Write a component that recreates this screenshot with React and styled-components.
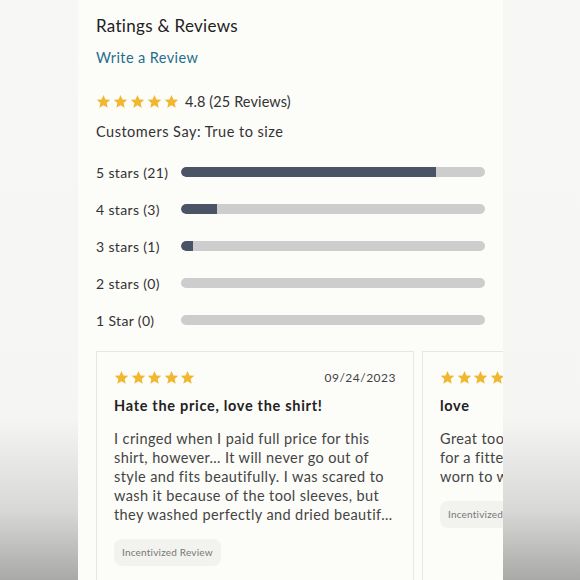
import React from "react";
import styled, { createGlobalStyle } from "styled-components";

const Global = createGlobalStyle`
  html, body { margin: 0; padding: 0; }
  body {
    width: 580px;
    height: 580px;
    overflow: hidden;
    background: linear-gradient(to bottom, #f7f7f5 0%, #f5f5f3 72%, #d8d8d6 88%, #a9a9a7 100%);
    font-family: "Lato", "Noto Sans", sans-serif;
  }
`;

const Page = styled.div`
  display: flex;
  justify-content: flex-start;
  padding-left: 78px;
  height: 580px;
`;

const Panel = styled.section`
  width: 425px;
  height: 580px;
  box-sizing: border-box;
  padding: 14px 0 0 18px;
  background: #fcfcf9;
  overflow: hidden;
  display: flex;
  flex-direction: column;
`;

const Heading = styled.h2`
  margin: 0;
  font-size: 17px;
  line-height: 24px;
  font-weight: 400;
  color: #222;
  letter-spacing: 0.3px;
`;

const WriteLink = styled.a`
  margin-top: 10px;
  font-size: 14.5px;
  line-height: 20px;
  color: #1f6f8b;
  letter-spacing: 0.4px;
  text-decoration: none;
`;

const SummaryRow = styled.div`
  margin-top: 23px;
  display: flex;
  align-items: center;
  gap: 6px;
  height: 20px;
`;

const Stars = styled.div`
  display: flex;
  gap: ${(p) => p.$gap}px;
`;

const SummaryText = styled.span`
  font-size: 14.5px;
  color: #333;
  letter-spacing: 0.1px;
`;

const Say = styled.div`
  margin-top: 11px;
  font-size: 14.5px;
  line-height: 20px;
  color: #333;
  letter-spacing: 0.5px;
`;

const Bars = styled.div`
  margin-top: 20px;
  display: flex;
  flex-direction: column;
  gap: 17px;
  width: 389px;
`;

const BarRow = styled.div`
  display: flex;
  align-items: center;
  height: 20px;
`;

const BarLabel = styled.span`
  width: 85px;
  flex-shrink: 0;
  font-size: 14px;
  color: #333;
  letter-spacing: 0.35px;
`;

const Track = styled.div`
  flex: 1;
  height: 10px;
  border-radius: 5px;
  background: #cdcdcd;
  overflow: hidden;
  display: flex;
`;

const Fill = styled.div`
  height: 100%;
  background: #4a5466;
  border-radius: 5px 0 0 5px;
`;

const Cards = styled.div`
  margin-top: 21px;
  display: flex;
  gap: 8px;
  flex: 1;
`;

const Card = styled.article`
  width: 318px;
  flex-shrink: 0;
  box-sizing: border-box;
  border: 1px solid #e6e6e2;
  border-bottom: none;
  padding: 17px 17px 0;
  background: #fcfcf9;
`;

const CardTop = styled.div`
  display: flex;
  justify-content: space-between;
  align-items: center;
  height: 16px;
`;

const DateText = styled.span`
  font-size: 12px;
  color: #444;
  letter-spacing: 0.5px;
`;

const Title = styled.h3`
  margin: 11px 0 0;
  font-size: 14.5px;
  line-height: 20px;
  font-weight: 700;
  color: #222;
  letter-spacing: 0.7px;
`;

const Body = styled.p`
  margin: 13px 0 0;
  font-size: 14.5px;
  line-height: 19px;
  color: #444;
  letter-spacing: 0.4px;
`;

const Badge = styled.span`
  display: inline-block;
  margin-top: 15px;
  padding: 0 8px;
  height: 27px;
  line-height: 27px;
  border-radius: 8px;
  background: #f2f2ef;
  font-size: 10px;
  color: #777;
  letter-spacing: 0.2px;
  white-space: nowrap;
`;

const Star = ({ size }) => (
  <svg width={size} height={size} viewBox="0 0 24 24">
    <path
      d="M12 1.5l3.1 7.1 7.7.7-5.8 5.1 1.7 7.6L12 18l-6.7 4 1.7-7.6L1.2 9.3l7.7-.7z"
      fill="#f0b72f"
    />
  </svg>
);

const StarRow = ({ size = 15, gap = 2 }) => (
  <Stars $gap={gap}>
    {[0, 1, 2, 3, 4].map((i) => (
      <Star key={i} size={size} />
    ))}
  </Stars>
);

const dist = [
  { label: "5 stars (21)", count: 21 },
  { label: "4 stars (3)", count: 3 },
  { label: "3 stars (1)", count: 1 },
  { label: "2 stars (0)", count: 0 },
  { label: "1 Star (0)", count: 0 },
];

const reviews = [
  {
    date: "09/24/2023",
    title: "Hate the price, love the shirt!",
    body:
      "I cringed when I paid full price for this shirt, however… It will never go out of style and fits beautifully. I was scared to wash it because of the tool sleeves, but they washed perfectly and dried beautif…",
  },
  {
    date: "08/11/2023",
    title: "love",
    body:
      "Great tool detail and soft fabric, perfect for a fitted look under a jacket. I have worn to work and out to dinner.",
  },
];

export default function App() {
  return (
    <>
      <Global />
      <Page>
        <Panel>
          <Heading>Ratings &amp; Reviews</Heading>
          <WriteLink href="#">Write a Review</WriteLink>
          <SummaryRow>
            <StarRow size={15} gap={2} />
            <SummaryText>4.8 (25 Reviews)</SummaryText>
          </SummaryRow>
          <Say>Customers Say: True to size</Say>
          <Bars>
            {dist.map((d) => (
              <BarRow key={d.label}>
                <BarLabel>{d.label}</BarLabel>
                <Track>
                  <Fill style={{ width: `${(d.count / 25) * 100}%` }} />
                </Track>
              </BarRow>
            ))}
          </Bars>
          <Cards>
            {reviews.map((r) => (
              <Card key={r.title}>
                <CardTop>
                  <StarRow size={15} gap={1.5} />
                  <DateText>{r.date}</DateText>
                </CardTop>
                <Title>{r.title}</Title>
                <Body>{r.body}</Body>
                <Badge>Incentivized Review</Badge>
              </Card>
            ))}
          </Cards>
        </Panel>
      </Page>
    </>
  );
}
